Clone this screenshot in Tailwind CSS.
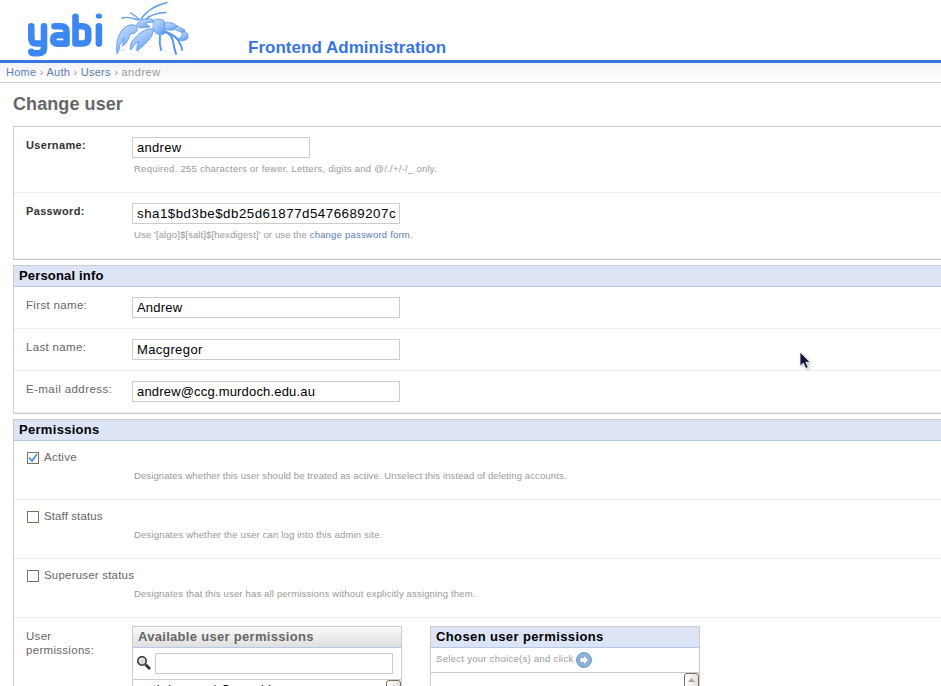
<!DOCTYPE html>
<html lang="en">
<head>
<meta charset="utf-8">
<title>Change user</title>
<script src="https://cdn.jsdelivr.net/npm/@tailwindcss/browser@4"></script>
</head>
<body class="h-[686px] overflow-hidden bg-white text-[#666] font-['Liberation_Sans',Arial,sans-serif] text-[12px] leading-[14px]">
<header class="flex h-[63px] border-b-3 border-[#3875e0] pl-[26px]">
  <svg class="w-[80px] h-[60px] shrink-0" viewBox="26 0 80 60" fill="none" stroke="#3d87f2" stroke-width="6.6" stroke-linecap="round" stroke-linejoin="round" role="img" aria-label="yabi">
    <path d="M31.300 26.300V38q0 5.500 5 5.500h6.500M44 26.300V48q0 5.200-6 5.200H34q-2.700 0-2.700-1.500"/>
    <path d="M54.500 26.300h6q6 0 6 5.500V43.600H58q-4.800 0-4.800-4.200t4.800-4.200h7"/>
    <path d="M75.500 16.700V43.500H82q6.200 0 6.200-5.300v-6.400q0-5.500-6.200-5.500H77M98.900 26.300V43.600"/><path d="M98.400 16h1" stroke-width="5.200"/>
  </svg>
  <svg class="ml-[4px] w-[84px] h-[60px] shrink-0" viewBox="0 0 84 60" stroke-linecap="round" stroke-linejoin="round" aria-hidden="true">
    <defs>
      <linearGradient id="shell" x1="0" y1="0" x2=".6" y2="1"><stop offset="0" stop-color="#c3dafb"/><stop offset=".45" stop-color="#a6c9fa"/><stop offset="1" stop-color="#6ba3f3"/></linearGradient>
      <linearGradient id="fade" x1="0" y1="0" x2="0" y2="1"><stop offset="0" stop-color="#b9cff2"/><stop offset="1" stop-color="#fff"/></linearGradient>
    </defs>
    <path d="M9 52l5-3 3 8M25 49l8 7M53 49l6 6M66 53l8 4" fill="none" stroke="url(#fade)" stroke-width="1.500" opacity=".5"/>
    <g fill="none" stroke="#5e9af0">
      <path d="M31 19Q39 7 57 2.500" stroke-width="1.500"/><path d="M36 19Q43 13 56 12.500" stroke-width="1.300"/>
      <path d="M30 20Q25 15 20.500 13" stroke-width="1.300"/><path d="M28 20Q19 16 12 18" stroke-width="1.400"/>
    </g>
    <g fill="url(#shell)" stroke="#5b97ee" stroke-width=".8">
      <path d="M27 26Q19 22 12 30Q5 39 7 54Q10 49 10 44Q13 42 14 38L12.500 46Q18 43 20 34Q25 34 27 31Z"/>
      <path d="M29 34Q35 28 44 29Q43 37 36 43Q30 49 27 51Q26 46 29 41Q24 44 21 50Q19 46 23 40Z"/>
      <path d="M27 24L33 19L42 19L43 22L35 23L40 27L30 28Z"/>
      <path d="M44 20Q53 17 55 23L54 34Q47 37 43 29Z"/>
      <path d="M55 23Q62 21 67 26L64 30H55Z"/>
      <path d="M67 26L75 30L74 33L66 30Z"/>
      <path d="M72 32Q79 31 78 38Q74 43 66 39Q72 38 72 35Z"/>
    </g>
    <g fill="none" stroke="#5b97ee" stroke-width="2">
      <path d="M54 32Q61 33 63 41Q64 48 66 54M56 32Q67 36 69 42Q72 47 72 50M50 36Q49 43 51 50"/>
    </g>
  </svg>
  <h1 class="ml-[54px] mt-[38px] whitespace-nowrap text-[17px] leading-[20px] tracking-[0.02px] font-bold text-[#3875e0]">Frontend Administration</h1>
</header>
<nav class="h-[20px] border-b border-[#ccc] bg-linear-to-b from-[#f3f3f3] to-white px-[6px] pt-[2px] text-[11px] tracking-[0.27px] text-[#999] whitespace-nowrap"><a class="text-[#5b80b2]">Home</a> › <a class="text-[#5b80b2]">Auth</a> › <a class="text-[#5b80b2]">Users</a> › <span class="tracking-[0.55px]">andrew</span></nav>
<main class="pl-[13px]">
  <h2 class="h-[43px] pt-[11px] text-[18px] leading-[20px] tracking-[0.08px] font-bold">Change user</h2>
  <section class="mb-[5px] border border-r-0 border-[#ccc]">
    <div class="flex h-[66px] border-b border-[#eee] pl-[12px] pt-[10px]">
      <label class="w-[106px] pt-[2px] text-[11px] leading-[13px] tracking-[0.35px] font-bold text-[#333]">Username:</label>
      <div><input class="block h-[21px] w-[178px] border border-[#ccc] px-[4px] text-[13px] tracking-[0.3px] text-black" value="andrew">
      <p class="mt-[4px] pl-[2px] text-[9.500px] tracking-[0.26px] text-[#999] whitespace-nowrap">Required. 255 characters or fewer. Letters, digits and @/./+/-/_ only.</p></div>
    </div>
    <div class="flex h-[66px] border-b border-[#eee] pl-[12px] pt-[10px]">
      <label class="w-[106px] pt-[2px] text-[11px] leading-[13px] tracking-[0.35px] font-bold text-[#333]">Password:</label>
      <div><input class="block h-[21px] w-[268px] border border-[#ccc] pl-[4px] text-[13.300px] tracking-[0.5px] text-black" value="sha1$bd3be$db25d61877d5476689207c">
      <p class="mt-[4px] pl-[2px] text-[9.500px] tracking-[0.12px] text-[#999] whitespace-nowrap">Use '[algo]$[salt]$[hexdigest]' or use the <a class="tracking-[0.21px] text-[#5b80b2]">change password form</a>.</p></div>
    </div>
  </section>
  <section class="mb-[5px] border border-r-0 border-[#ccc]">
    <h3 class="h-[21px] border-b border-[#b5c8e8] bg-[#dce4f6] pl-[5px] pt-px text-[13px] leading-[18px] tracking-[0.17px] font-bold text-black">Personal info</h3>
    <div class="flex h-[42px] border-b border-[#eee] pl-[12px] pt-[10px]">
      <label class="w-[106px] pt-px text-[11.500px] tracking-[0.33px]">First name:</label><input class="h-[21px] w-[268px] border border-[#ccc] px-[4px] text-[13px] tracking-[0.2px] text-black" value="Andrew">
    </div>
    <div class="flex h-[42px] border-b border-[#eee] pl-[12px] pt-[10px]">
      <label class="w-[106px] pt-px text-[11.500px] tracking-[0.33px]">Last name:</label><input class="h-[21px] w-[268px] border border-[#ccc] px-[4px] text-[13px] tracking-[0.4px] text-black" value="Macgregor">
    </div>
    <div class="flex h-[42px] border-b border-[#eee] pl-[12px] pt-[10px]">
      <label class="w-[106px] pt-px text-[11.500px] tracking-[0.42px] whitespace-nowrap">E-mail address:</label><input class="h-[21px] w-[268px] border border-[#ccc] px-[4px] text-[13px] tracking-[0.18px] text-black" value="andrew@ccg.murdoch.edu.au">
    </div>
  </section>
  <section class="border border-r-0 border-[#ccc]">
    <h3 class="h-[21px] border-b border-[#b5c8e8] bg-[#dce4f6] pl-[5px] pt-px text-[13px] leading-[18px] tracking-[0.3px] font-bold text-black">Permissions</h3>
    <div class="h-[59px] border-b border-[#eee] pl-[13px] pt-[9px]">
      <div class="flex gap-[5px]"><span class="mt-[2px] flex size-[12px] border border-[#7b7160]"><svg class="size-[10px]" viewBox="0 0 10 10" fill="none" stroke="#4b97e3" stroke-width="1.900"><path d="M1 4.500l3 3.500L9 1"/></svg></span><label class="text-[11.500px] tracking-[0.25px]">Active</label></div>
      <p class="mt-[5px] pl-[107px] text-[9.500px] tracking-[0.11px] text-[#999] whitespace-nowrap">Designates whether this user should be treated as active. Unselect this instead of deleting accounts.</p>
    </div>
    <div class="h-[59px] border-b border-[#eee] pl-[13px] pt-[9px]">
      <div class="flex gap-[5px]"><span class="mt-[2px] size-[12px] border border-[#7b7160]"></span><label class="text-[11.500px] tracking-[0.1px]">Staff status</label></div>
      <p class="mt-[5px] pl-[107px] text-[9.500px] tracking-[0.18px] text-[#999] whitespace-nowrap">Designates whether the user can log into this admin site.</p>
    </div>
    <div class="h-[59px] border-b border-[#eee] pl-[13px] pt-[9px]">
      <div class="flex gap-[5px]"><span class="mt-[2px] size-[12px] border border-[#7b7160]"></span><label class="text-[11.500px] tracking-[0.2px]">Superuser status</label></div>
      <p class="mt-[5px] pl-[107px] text-[9.500px] tracking-[0.165px] text-[#999] whitespace-nowrap">Designates that this user has all permissions without explicitly assigning them.</p>
    </div>
    <div class="flex items-start pl-[12px] pt-[8px]">
      <label class="w-[106px] pt-[3px] text-[11.500px] tracking-[0.3px]">User<br>permissions:</label>
      <div class="w-[270px] border border-[#ccc]">
        <h4 class="h-[21px] border-b border-[#b5c8e8] bg-linear-to-b from-[#fafafa] to-[#dfdfdf] pl-[5px] pt-px text-[13px] leading-[18px] tracking-[0.3px] font-bold">Available user permissions</h4>
        <div class="flex h-[32px] border-b border-[#ccc] pl-[4px] pt-[5px]">
          <svg class="mt-[3px] mr-[4px] size-[14px]" viewBox="0 0 14 14"><circle cx="5" cy="5" r="4.200" fill="#d8d8d8" stroke="#333" stroke-width="1.500"/><path d="M2.500 5Q3 2.500 5.500 2.500" stroke="#fff" stroke-width="1.300" fill="none"/><path d="M8.500 8.500L13 13" stroke="#333" stroke-width="2.800"/></svg>
          <input class="h-[21px] w-[238px] border border-[#ccc]">
        </div>
        <div class="flex h-[30px] justify-between pl-[5px]"><span class="pt-[2px] text-[13px] leading-[16px] tracking-[0.2px] text-black">auth | group | Can add group</span><span class="h-[24px] w-[15px] rounded-[3px] border border-[#7b6f5f] bg-linear-to-r from-white to-[#e5e1da] flex justify-center"><svg class="mt-[4px] h-[4px] w-[7px]" viewBox="0 0 7 4"><path d="M0 4L3.500 0 7 4z" fill="#aaa59d"/></svg></span></div>
      </div>
      <div class="ml-[28px] w-[270px] border border-[#ccc]">
        <h4 class="h-[21px] border-b border-[#b5c8e8] bg-[#dce4f6] pl-[5px] pt-px text-[13px] leading-[18px] tracking-[0.38px] font-bold text-black">Chosen user permissions</h4>
        <div class="flex h-[25px] border-b border-[#ccc] pl-[5px] pt-[4px] text-[9.500px] tracking-[0.3px] text-[#999]"><span class="mr-[2px]">Select your choice(s) and click</span><svg class="size-[16px]" viewBox="0 0 16 16"><circle cx="8" cy="8" r="7.500" fill="#8cb0d6" stroke="#719bc7"/><path d="M4.500 6.200h3.500V4L12 8 8 12V9.800H4.500z" fill="#fff"/></svg></div>
        <div class="flex h-[30px] justify-end"><span class="flex h-[24px] w-[15px] justify-center rounded-[3px] border border-[#7b6f5f] bg-linear-to-r from-white to-[#e5e1da]"><svg class="mt-[4px] h-[4px] w-[7px]" viewBox="0 0 7 4"><path d="M0 4L3.500 0 7 4z" fill="#aaa59d"/></svg></span></div>
      </div>
    </div>
  </section>
</main>
<svg class="absolute left-[797px] top-[350px] h-[22px] w-[16px]" viewBox="0 0 16 22"><path d="M3 2v14l3.300-2.800 2.500 5.300 2.500-1.200-2.500-5h4.300z" fill="#111936" stroke="#fff" stroke-width=".8" style="filter:drop-shadow(1px 1px 1px #bbb)"/></svg>
</body>
</html>
